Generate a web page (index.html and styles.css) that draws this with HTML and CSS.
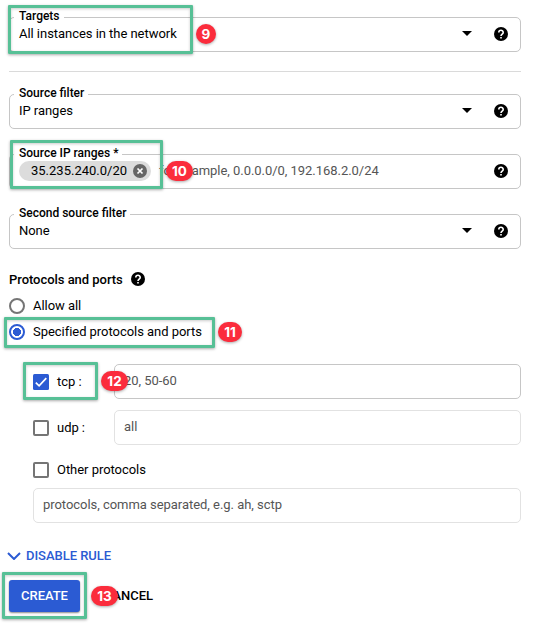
FILE: index.html
```html
<!DOCTYPE html>
<html lang="en">
<head>
<meta charset="utf-8">
<title>Create a firewall rule</title>
<link rel="stylesheet" href="styles.css">
</head>
<body>
<svg class="defs" width="0" height="0" aria-hidden="true">
  <symbol id="help" viewBox="0 0 14 14"><circle cx="7" cy="7" r="7"/><path d="M4.800 5.500C4.800 2.600 9.200 2.600 9.200 5.400C9.200 7 7 7.100 7 8.900" fill="none" stroke="#fff" stroke-width="1.600"/><path d="M6.200 10h1.600v1.600H6.200z" fill="#fff"/></symbol>
</svg>
<form class="form">
  <div class="field">
    <label class="legend">Targets</label>
    <span class="value">All instances in the network</span>
    <i class="caret"></i>
    <svg class="help"><use href="#help"/></svg>
    <span class="frame frame-targets"></span>
    <b class="badge badge-9">9</b>
  </div>
  <hr class="divider">
  <div class="field">
    <label class="legend legend-filter">Source filter</label>
    <span class="value">IP ranges</span>
    <i class="caret"></i>
    <svg class="help"><use href="#help"/></svg>
  </div>
  <div class="field field-next">
    <label class="legend legend-ip">Source IP ranges *</label>
    <span class="chip"><span class="chip-text">35.235.240.0/20</span>
      <svg class="remove" viewBox="0 0 14 14"><circle cx="7" cy="7" r="7"/><path d="M4.500 4.500l5 5M9.500 4.500l-5 5"/></svg>
    </span>
    <span class="hint hint-ip">for example, 0.0.0.0/0, 192.168.2.0/24</span>
    <svg class="help"><use href="#help"/></svg>
    <span class="frame frame-ip"></span>
    <b class="badge badge-10">10</b>
  </div>
  <div class="field field-next">
    <label class="legend legend-second">Second source filter</label>
    <span class="value">None</span>
    <i class="caret"></i>
    <svg class="help"><use href="#help"/></svg>
  </div>
  <div class="heading"><span class="heading-text">Protocols and ports</span><svg class="help-inline"><use href="#help"/></svg></div>
  <div class="option"><i class="radio"></i><span class="allow">Allow all</span></div>
  <div class="option"><i class="radio radio-on"></i><span class="specified">Specified protocols and ports</span>
    <span class="frame frame-radio"></span><b class="badge badge-11">11</b>
  </div>
  <div class="protocols">
    <div class="protocol">
      <div class="check-label"><svg class="check" viewBox="0 0 16 16"><rect width="16" height="16" rx="1.500"/><path d="M2.800 8.600l3.300 3.200 7.200-7.600"/></svg><span>tcp :</span></div>
      <div class="input input-active"><span class="hint">20, 50-60</span></div>
      <span class="frame frame-tcp"></span><b class="badge badge-12">12</b>
    </div>
    <div class="protocol">
      <div class="check-label"><i class="box"></i><span>udp :</span></div>
      <div class="input"><span class="hint">all</span></div>
    </div>
    <div class="other"><i class="box"></i><span class="other-text">Other protocols</span></div>
    <div class="input input-other"><span class="hint hint-other">protocols, comma separated, e.g. ah, sctp</span></div>
  </div>
  <div class="disable"><svg class="chevron" viewBox="0 0 14 8"><path d="M1 1l6 6 6-6"/></svg><span>DISABLE RULE</span></div>
  <div class="actions">
    <span class="create">CREATE</span><span class="cancel">CANCEL</span>
    <span class="frame frame-create"></span><b class="badge badge-13">13</b>
  </div>
</form>
</body>
</html>
```

FILE: styles.css
```css
* { box-sizing: border-box; }
body { margin: 0; min-height: 623px; background: #fff; color: #000; font: 13px/18px Roboto, sans-serif; letter-spacing: -.04px; white-space: nowrap; }
.defs { display: block; height: 0; }
.form { width: 521px; height: 623px; padding: 17px 0 0 9px; }
.field { position: relative; display: flex; align-items: center; height: 35px; border: 1px solid #c6c6c6; border-radius: 5px; padding: 0 12px 2px 9px; }
.field-next { margin-top: 25px; }
.legend { position: absolute; top: -10px; left: 4px; padding: 0 4px 0 5px; background: #fff; font-size: 12px; font-weight: 500; line-height: 16px; letter-spacing: 0; }
.value { flex: 1; }
.caret { border: 5px solid transparent; border-top-color: #000; border-bottom: 0; margin-right: 22px; }
.help { width: 14px; height: 14px; }
.divider { height: 1px; margin: 19px 0 22px; border: 0; background: #dadada; }
.chip { display: flex; align-items: center; width: 132px; height: 20px; margin-top: 1px; padding: 0 4px 0 12px; border-radius: 10px; background: #dcdcdc; }
.chip-text { flex: 1; letter-spacing: 0; }
.remove { width: 14px; height: 14px; fill: #666; stroke: #fff; stroke-width: 1.7; }
.remove circle { stroke: none; }
.hint { color: #555; }
.hint-ip { flex: 1; margin-left: 8px; }
.heading { display: flex; align-items: center; gap: 8px; height: 18px; margin-top: 22px; font-weight: 500; }
.help-inline { width: 14px; height: 14px; margin-top: -2px; }
.option { position: relative; display: flex; align-items: center; gap: 8px; height: 26px; }
.heading + .option { margin-top: 4px; }
.radio { width: 16px; height: 16px; border: 2px solid #757575; border-radius: 50%; }
.radio-on { border-color: #2b5bd3; background: radial-gradient(circle, #2b5bd3 3.800px, transparent 4.300px); }
.protocols { padding: 19px 0 0 24px; }
.protocol { position: relative; display: flex; align-items: center; margin-bottom: 11px; }
.check-label { display: flex; align-items: center; gap: 8px; width: 81px; }
.check { width: 16px; height: 16px; fill: #2b5bd3; }
.check path { fill: none; stroke: #fff; stroke-width: 1.700; }
.box { width: 16px; height: 16px; border: 2px solid #757575; border-radius: 2px; }
.input { flex: 1; height: 35px; padding: 8px 9px; border: 1px solid #e2e2e2; border-radius: 5px; line-height: 16px; }
.input-active { border-color: #c6c6c6; }
.other { display: flex; align-items: center; gap: 8px; height: 18px; margin: 16px 0 9px; }
.disable { display: flex; align-items: center; gap: 5px; height: 18px; margin: 24px 0 15px -2px; color: #2b5bd3; font-weight: 500; }
.chevron { width: 14px; height: 8px; fill: none; stroke: #2b5bd3; stroke-width: 2; }
.actions { position: relative; display: flex; align-items: center; height: 32px; font-weight: 500; }
.create { width: 71px; height: 32px; border-radius: 3px; background: #2b5bd3; color: #fff; line-height: 31px; text-align: center; box-shadow: 0 1px 2px #0007; }
.cancel { margin-left: 24px; }
.frame { position: absolute; border: 3px solid #57c096; border-radius: 1px; box-shadow: 0 1px 3px #0005, inset 0 1px 3px #0003; }
.frame-targets { left: -2px; top: -13px; width: 185px; height: 49px; }
.frame-ip { left: 0; top: -15px; width: 153px; height: 49px; }
.frame-radio { left: -5px; top: -2px; width: 211px; height: 31px; }
.frame-tcp { left: -10px; top: -2px; width: 75px; height: 38px; }
.frame-create { left: -7px; top: -8px; width: 85px; height: 47px; }
.badge { position: absolute; height: 20px; border-radius: 10px; background: #fb2c3c; color: #fff; font: bold 13.500px/20px Inter, sans-serif; text-align: center; letter-spacing: 0; box-shadow: 0 1px 3px #0005; }
.badge-9 { left: 186px; top: 6px; width: 20px; }
.badge-10 { left: 156px; top: 6px; width: 27px; }
.badge-11 { left: 209px; top: 3px; width: 24px; }
.badge-12 { left: 92px; top: 7px; width: 27px; margin-left: -24px; }
.badge-13 { left: 82px; top: 6px; width: 27px; }
```
